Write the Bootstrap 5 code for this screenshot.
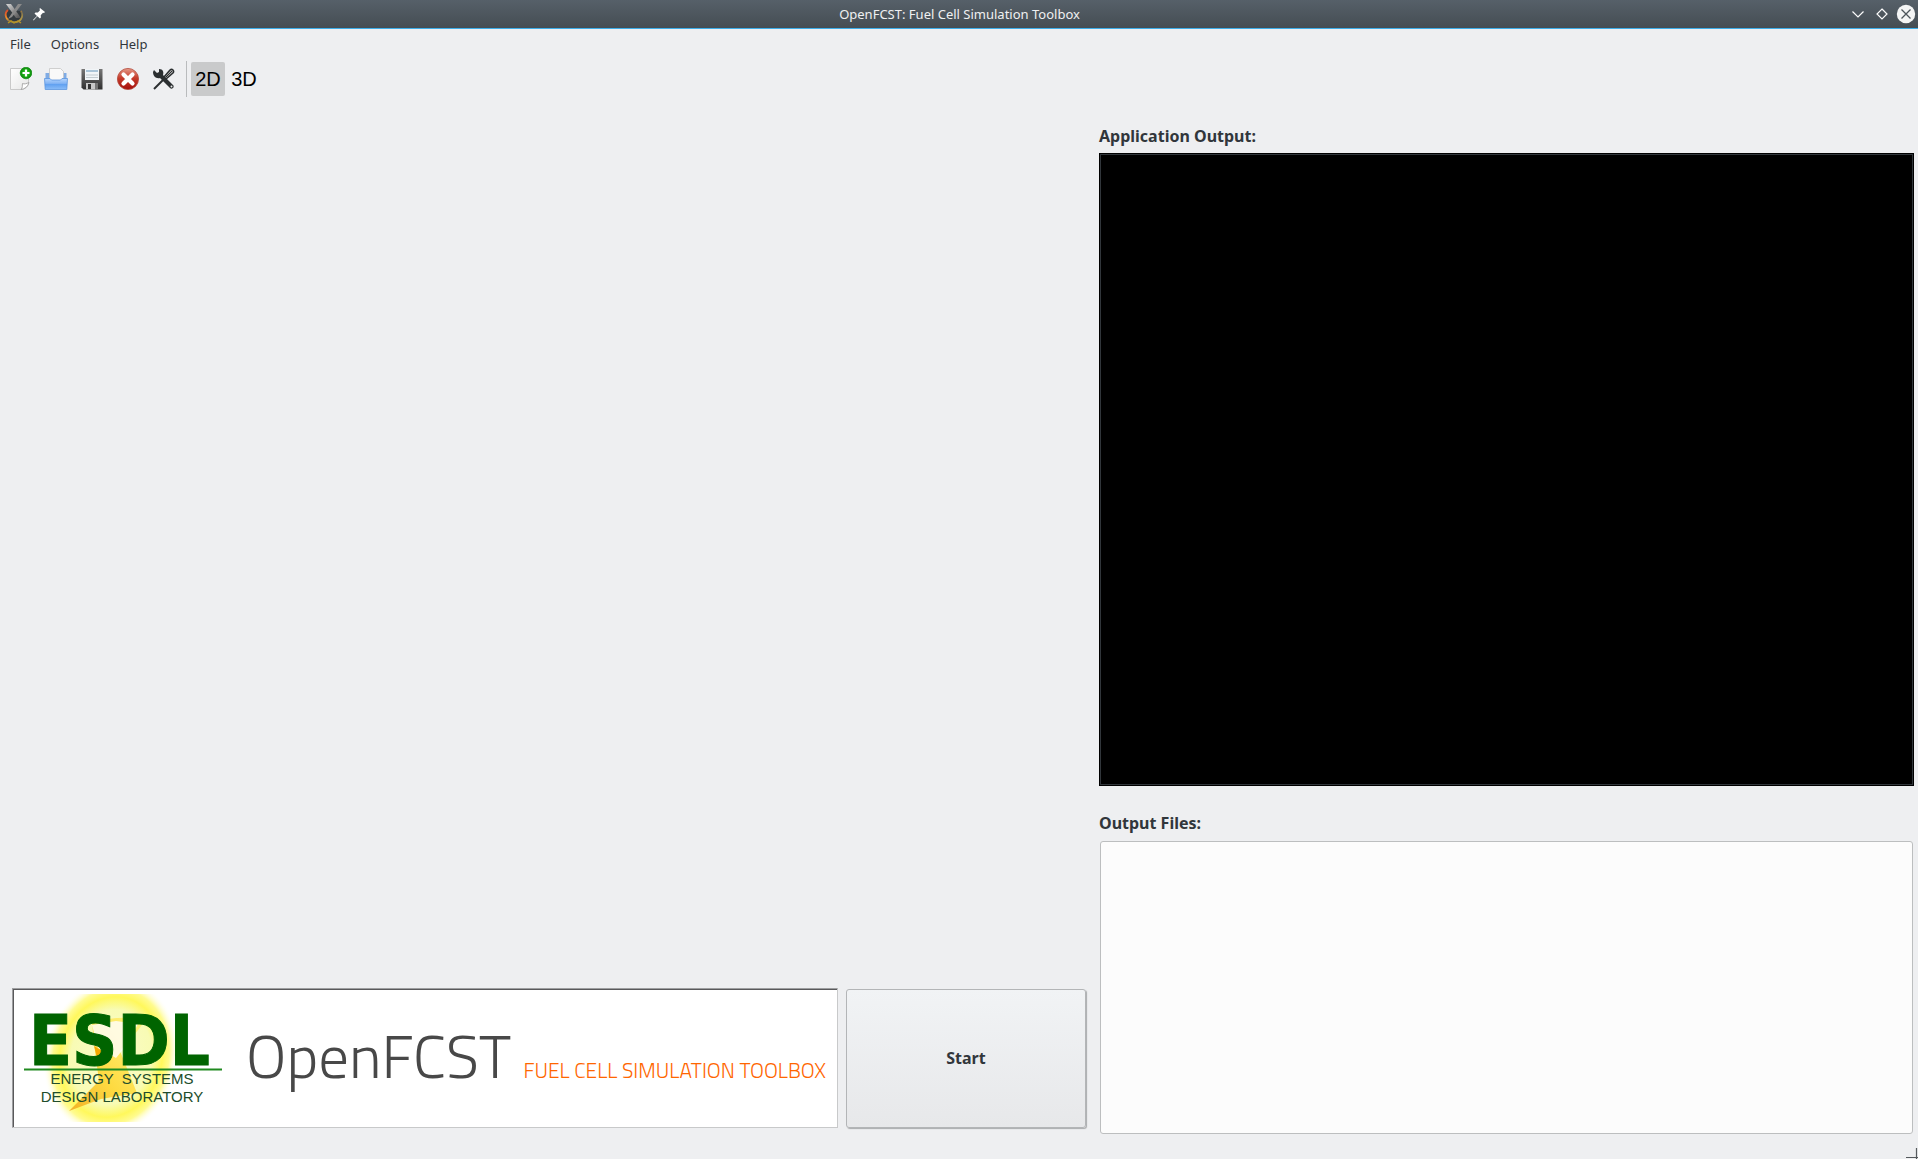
<!DOCTYPE html>
<html lang="en">
<head>
<meta charset="utf-8">
<meta name="viewport" content="width=device-width, initial-scale=1">
<title>OpenFCST: Fuel Cell Simulation Toolbox</title>
<link rel="stylesheet" href="https://cdn.jsdelivr.net/npm/bootstrap@5.3.0/dist/css/bootstrap.min.css">
<style>
body { background: #eeeff1; color: #31363b; font: 13px/18px "Noto Sans", sans-serif; }
.titlebar { height: 29px; background: linear-gradient(#566069, #454d53); border-bottom: 1px solid #3daee9; color: #eff0f1; padding: 0 2px 0 3px; }
.titlebar .side { flex: 1 1 0; }
.menubar { padding: 6px 0; }
.menubar a { color: #31363b; padding: 0 10px; }
.tools { height: 38px; margin-top: 1px; padding: 0 2px; }
.tool { width: 36px; height: 36px; padding: 0; border: 0; background: none; }
.tool svg { display: block; margin: auto; }
.titlebar svg { display: block; }
.mode { width: 34px; height: 34px; padding: 0; border: 0; border-radius: 2px; background: none; color: #000; font: 20px/34px "Liberation Sans", sans-serif; margin-right: 2px; }
.mode.active { background: #c9cacb; }
.divider { width: 1px; height: 36px; background: #b9bbbd; margin: 0 4px; }
.leftpane { flex: 1074 1 0; min-width: 0; padding: 0 2px 31px 12px; }
.rightpane { flex: 815 1 0; min-width: 0; padding: 27px 4px 25px 11px; }
.heading { font-size: 16px; line-height: 22px; font-weight: 700; margin-bottom: 6px; display: block; }
.console { flex: 634 1 0; resize: none; background: #000; color: #fff; border: 1px solid #000; box-shadow: inset 0 0 0 1px #31363b; margin-bottom: 26px; }
.files { flex: 294 1 0; background: #fcfcfc; border: 1px solid #bcbebf; border-radius: 3px; margin: 1px 1px 0; }
.banner { height: 140px; background: #fff; border: 1px solid; border-color: #9d9ea0 #c8c9ca #c8c9ca #9d9ea0; box-shadow: inset 1px 1px #59595b; min-width: 0; }
.branding { padding: 32px 11px 0 7px; }
.wordmark { font: 300 61px/70px "Titillium Web", Roboto, sans-serif; color: #484848; }
.tagline { font: 300 21px/26px "Titillium Web", Roboto, sans-serif; color: #ff6600; }
.lab { font: 15px "Liberation Sans", sans-serif; fill: #214d2b; text-anchor: middle; white-space: pre; }
.initials { font: 700 70px "DejaVu Sans Condensed", "Open Sans", sans-serif; fill: #006400; stroke: #006400; }
.start { width: 240px; height: 139px; margin-left: 8px; padding: 0 0 2px; border: 1px solid #b3b5b7; border-radius: 3px; background: linear-gradient(#f1f3f5, #e7e8ea); box-shadow: 1px 1px 1px #a9abad; color: #31363b; font-size: 16px; font-weight: 700; }
.grip { right: 0; bottom: 0; }
</style>
<script src="https://cdn.jsdelivr.net/npm/bootstrap@5.3.0/dist/js/bootstrap.bundle.min.js"></script>
</head>
<body class="vh-100 d-flex flex-column overflow-hidden position-relative">
<header class="titlebar d-flex align-items-center flex-shrink-0">
  <div class="side d-flex align-items-center gap-2">
    <svg width="22" height="22" viewBox="0 0 22 22" aria-hidden="true"><defs><linearGradient id="ring" x2="1" y2="1"><stop stop-color="#d8402a"/><stop offset=".4" stop-color="#f09a28"/><stop offset=".6" stop-color="#766b50"/><stop offset="1" stop-color="#d5b13d"/></linearGradient><linearGradient id="ex" x2="1" y2="1"><stop stop-color="#d8d8d8"/><stop offset="1" stop-color="#4b4b4b"/></linearGradient></defs><path d="M5 7C1 10 2 18 10 19s11-6 8-11" fill="#333a3e" stroke="url(#ring)" stroke-width="1.800"/><path d="M3 1h5l10 14h-5z" fill="url(#ex)"/><path d="M15 1h4L9 14l-4 2z" fill="#8a8a8a"/><path d="M5 20l3-2 3 2 4-2 3 2" fill="none" stroke="#b59427" stroke-width="1.500"/></svg>
    <button class="border-0 bg-transparent p-0" aria-label="Pin window"><svg width="12" height="13" viewBox="0 0 12 13"><path d="M7 0l5 4-1 1-1-.3-2.3 2.5.2 2.3-1 1L4.4 8.300 1 12l-1 .4.4-1L4 8 1.500 5.500l1-1 2.400.1L7 2.200 6.500 1z" fill="#fff"/></svg></button>
  </div>
  <div>OpenFCST: Fuel Cell Simulation Toolbox</div>
  <div class="side d-flex justify-content-end align-items-center gap-1">
    <button class="border-0 bg-transparent p-0" aria-label="Minimize"><svg width="20" height="20" viewBox="0 0 20 20"><path d="M4.500 7.500l5.500 5.500 5.500-5.500" fill="none" stroke="#fcfcfc" stroke-width="1.200"/></svg></button>
    <button class="border-0 bg-transparent p-0" aria-label="Maximize"><svg width="20" height="20" viewBox="0 0 20 20"><path d="M10 5l5 5-5 5-5-5z" fill="none" stroke="#fcfcfc" stroke-width="1.200"/></svg></button>
    <button class="border-0 bg-transparent p-0" aria-label="Close"><svg width="20" height="20" viewBox="0 0 20 20"><circle cx="10" cy="10" r="9.200" fill="#f4f5f5"/><path d="M5.500 5.500l9 9m0-9l-9 9" stroke="#4d555b" stroke-width="1.300"/></svg></button>
  </div>
</header>
<nav class="menubar d-flex flex-shrink-0"><a href="#" class="text-decoration-none">File</a><a href="#" class="text-decoration-none">Options</a><a href="#" class="text-decoration-none">Help</a></nav>
<div class="tools d-flex align-items-center flex-shrink-0" role="toolbar" aria-label="Main tools">
  <button class="tool" aria-label="New"><svg width="24" height="24" viewBox="0 0 24 24"><defs><radialGradient id="gr"><stop stop-color="#39d52c"/><stop offset="1" stop-color="#078b08"/></radialGradient><linearGradient id="pg" x2="1" y2="1"><stop stop-color="#fff"/><stop offset="1" stop-color="#e6e6e6"/></linearGradient></defs><path d="M2.500 1.500h18V17q-2 5-7 5.500h-11z" fill="url(#pg)" stroke="#c9c9c9"/><path d="M13 22.500c2-2 1-4 1.500-6 2 1 4 0 6.500-1-1 4-4 6.500-8 7z" fill="#fff" stroke="#999" stroke-width=".8"/><circle cx="18" cy="6" r="5.800" fill="url(#gr)" stroke="#0a860b" stroke-width=".7"/><path d="M18 2.500v7M14.500 6h7" stroke="#fff" stroke-width="2.200"/></svg></button>
  <button class="tool" aria-label="Open"><svg width="24" height="24" viewBox="0 0 24 24"><defs><linearGradient id="fo" x2="0" y2="1"><stop stop-color="#b5d5fd"/><stop offset=".45" stop-color="#83b4f4"/><stop offset=".5" stop-color="#5e9ff0"/><stop offset="1" stop-color="#8bbdf8"/></linearGradient></defs><path d="M1.500 6h21v8h-21z" fill="#7fabe4"/><path d="M5.500 1.500h11l3 3V14h-14z" fill="#f9f9f9" stroke="#c5c5c5" stroke-width=".8"/><path d="M.5 11.500h5.500l1.500 1.500h9l1.500-1.500h5.500l-.7 11H1.200z" fill="url(#fo)" stroke="#5c96df" stroke-width=".8"/></svg></button>
  <button class="tool" aria-label="Save"><svg width="24" height="24" viewBox="0 0 24 24"><defs><linearGradient id="fl" x2="0" y2="1"><stop stop-color="#777"/><stop offset="1" stop-color="#2f2f2f"/></linearGradient></defs><path d="M1.500 2h21v20.500H3.500l-2-2z" fill="url(#fl)"/><path d="M5 2h14v11H5z" fill="#f1f5f8"/><path d="M6 3h12v2H6z" fill="#a9c4d8"/><path d="M6 8h12M6 10.500h12" stroke="#c2cbd0"/><path d="M6 16h12v6.500H6z" fill="#c9c9c9"/><path d="M8 17h3v5H8z" fill="#333"/><path d="M15 16h3v6.500h-3z" fill="#777"/></svg></button>
  <button class="tool" aria-label="Stop"><svg width="24" height="24" viewBox="0 0 24 24"><defs><linearGradient id="rd" x2="0" y2="1"><stop stop-color="#e59a88"/><stop offset=".45" stop-color="#c63c2b"/><stop offset="1" stop-color="#a50e0b"/></linearGradient></defs><circle cx="12" cy="12" r="10.600" fill="url(#rd)" stroke="#b44c3f" stroke-width=".8"/><path d="M7.500 7.500l9 9m0-9l-9 9" stroke="#fff" stroke-width="4.200" stroke-linecap="round"/></svg></button>
  <button class="tool" aria-label="Settings"><svg width="24" height="24" viewBox="0 0 24 24"><path d="M2 22l9-9" stroke="#2b2f31" stroke-width="2"/><path d="M12 10l6-7c2-2 5 1 3 3l-7 6z" fill="#aaa" stroke="#2b2f31" stroke-width="1.500"/><path d="M14 10l6-6" stroke="#2b2f31" stroke-width="1"/><path d="M2 3l3 3 2-1 0-3c4 0 5 3 4 6l10 10c2 2-1 5-3 3L8 11c-4 1-7-2-7-6z" fill="#2b2f31"/><circle cx="19.500" cy="19.500" r="1" fill="#eee"/></svg></button>
  <div class="divider"></div>
  <button class="mode active" aria-pressed="true">2D</button><button class="mode" aria-pressed="false">3D</button>
</div>
<main class="d-flex flex-grow-1">
  <section class="leftpane d-flex align-items-end">
    <div class="banner flex-grow-1 d-flex align-items-start">
      <svg width="226" height="138" viewBox="-1 -1 226 138" class="flex-shrink-0" role="img" aria-label="ESDL Energy Systems Design Laboratory">
        <defs><radialGradient id="sun"><stop stop-color="#fbfccb"/><stop offset=".6" stop-color="#f8fbb4"/><stop offset=".76" stop-color="#fff85c"/><stop offset=".86" stop-color="#fffb90"/><stop offset="1" stop-color="#fff" stop-opacity="0"/></radialGradient><linearGradient id="bolt" x1="1" x2="0" y2="1"><stop stop-color="#fff47a"/><stop offset=".6" stop-color="#ffd42a"/><stop offset="1" stop-color="#f0a51c"/></linearGradient><clipPath id="crop"><path d="M0 4h226v128H0z"/></clipPath></defs>
        <g clip-path="url(#crop)"><ellipse cx="97" cy="67" rx="67" ry="80" transform="rotate(15 97 67)" fill="url(#sun)"/></g>
        <path d="M78 33q22-8 54-4-8 12-14 18l-12 14 17 42-36 6-32 12 30-30-3-22z" fill="url(#bolt)" opacity=".85"/>
        <path d="M78 35l24-4 22 3-12 22-10 12-18-10z" fill="#fff" opacity=".8"/>
        <path d="M80 56l10 6-1 12-4 2z" fill="#f5a800"/>
        <text class="initials" x="15" y="75">ESDL</text>
        <path d="M10 79.500h198" stroke="#208a20" stroke-width="2"/>
        <text class="lab" x="108" y="94">ENERGY  SYSTEMS</text><text class="lab" x="108" y="112">DESIGN LABORATORY</text>
      </svg>
      <div class="branding d-flex align-items-baseline justify-content-between flex-grow-1 text-nowrap"><span class="wordmark">OpenFCST</span><span class="tagline">FUEL CELL SIMULATION TOOLBOX</span></div>
    </div>
    <button class="start flex-shrink-0">Start</button>
  </section>
  <section class="rightpane d-flex flex-column">
    <label class="heading" for="console">Application Output:</label>
    <textarea id="console" class="console" readonly></textarea>
    <h2 class="heading" id="files-title">Output Files:</h2>
    <div class="files" role="list" aria-labelledby="files-title"></div>
  </section>
</main>
<svg class="grip position-absolute" width="12" height="12" viewBox="0 0 12 12" aria-hidden="true"><path d="M10.500 1v11M0 10.500h12" stroke="#55595c" stroke-width="1.200"/></svg>
</body>
</html>
